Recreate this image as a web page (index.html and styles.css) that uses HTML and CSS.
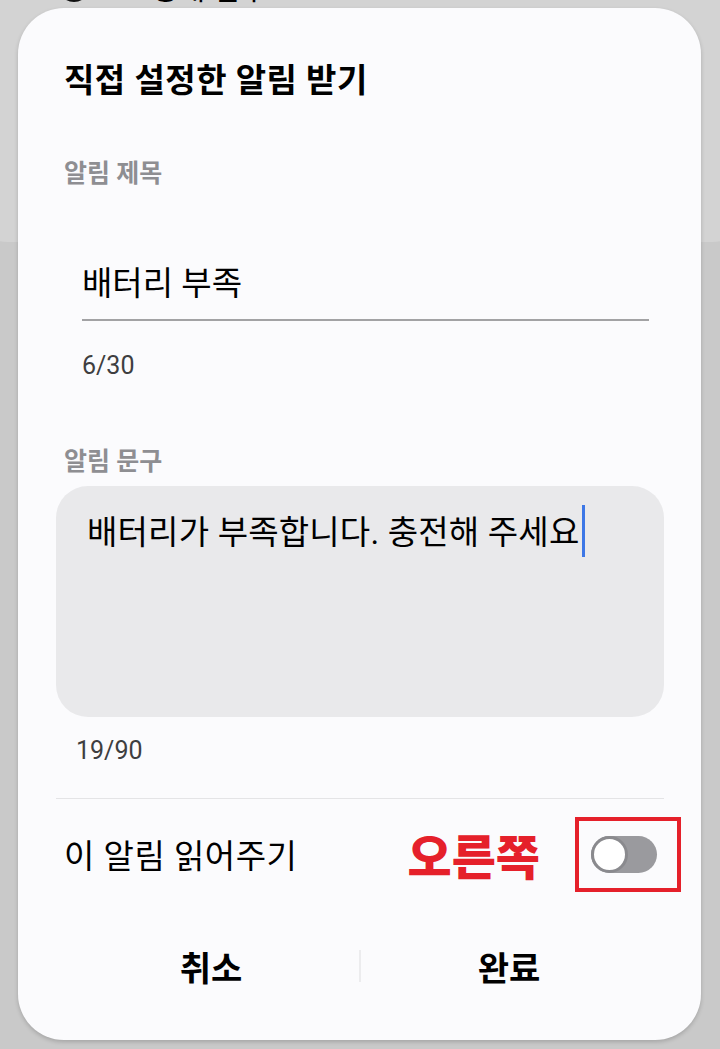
FILE: index.html
```html
<!DOCTYPE html>
<html lang="ko">
<head>
    <meta charset="UTF-8">
    <meta name="viewport" content="width=device-width, initial-scale=1.0">
    <title>직접 설정한 알림 받기</title>
    <link rel="stylesheet" href="styles.css">
</head>
<body>
    <div class="behind">
        <div class="behind-row">
            <span class="behind-icon"></span>
            <span class="behind-text">생애 접수</span>
        </div>
    </div>

    <div class="dialog">
        <h1 class="title">직접 설정한 알림 받기</h1>

        <div class="field-label first">알림 제목</div>
        <div class="title-input">배터리 부족</div>
        <div class="counter title-counter">6/30</div>

        <div class="field-label">알림 문구</div>
        <div class="message-box">
            <span>배터리가 부족합니다. 충전해 주세요</span><span class="cursor"></span>
        </div>
        <div class="counter message-counter">19/90</div>

        <div class="divider"></div>

        <div class="read-row">
            <span class="read-label">이 알림 읽어주기</span>
            <span class="annotation">오른쪽</span>
            <div class="toggle-frame">
                <div class="toggle"><span class="knob"></span></div>
            </div>
        </div>

        <div class="actions">
            <button class="action">취소</button>
            <span class="action-sep"></span>
            <button class="action">완료</button>
        </div>
    </div>
</body>
</html>
```

FILE: styles.css
```css
body {
    margin: 0;
    height: 1049px;
    overflow: hidden;
    position: relative;
    background-color: #c9c9c9;
    font-family: Roboto, "Noto Sans CJK KR", sans-serif;
    color: #000;
}
.behind {
    position: absolute;
    top: -60px;
    left: -40px;
    width: 800px;
    height: 302px;
    border-radius: 48px;
    background-color: #d3d3d3;
}
.behind-row {
    display: flex;
    align-items: center;
    gap: 60px;
    padding: 24px 0 0 98px;
    font-size: 30px;
}
.behind-icon {
    width: 26px;
    height: 26px;
    border: 3px solid #111;
    border-radius: 50%;
}
.dialog {
    position: relative;
    margin: 8px 19px 0 18px;
    height: 1032px;
    border-radius: 46px;
    background-color: #fbfbfd;
    box-shadow: 0 2px 4px rgba(0, 0, 0, 0.18);
    display: flex;
    flex-direction: column;
}
.title {
    margin: 0;
    padding: 50px 0 0 46px;
    font-size: 33px;
    line-height: 46px;
    font-weight: 700;
    letter-spacing: 0.5px;
}
.field-label {
    margin: 0 0 0 46px;
    padding-top: 65px;
    font-size: 25px;
    line-height: 32px;
    font-weight: 700;
    color: #8e8e92;
}
.field-label.first {
    padding-top: 54px;
}
.title-input {
    margin: 73px 52px 0 64px;
    padding-bottom: 14px;
    border-bottom: 2px solid #a2a2a4;
    font-size: 33px;
    line-height: 42px;
}
.counter {
    font-size: 25px;
    line-height: 30px;
    color: #3e3e40;
}
.title-counter {
    margin: 30px 0 0 64px;
}
.message-box {
    margin: 8px 37px 0 38px;
    height: 231px;
    box-sizing: border-box;
    padding: 24px 0 0 31px;
    border-radius: 32px;
    background-color: #e9e9eb;
    font-size: 33px;
    line-height: 46px;
    letter-spacing: 0.2px;
    display: flex;
    align-items: flex-start;
}
.cursor {
    width: 3px;
    height: 52px;
    margin: -5px 0 0 3px;
    background-color: #3d77e6;
}
.message-counter {
    margin: 19px 0 0 58px;
}
.divider {
    margin: 32px 37px 0 38px;
    height: 1px;
    background-color: #e4e4e6;
}
.read-row {
    display: flex;
    align-items: center;
    margin: 17px 20px 0 46px;
    height: 76px;
}
.read-label {
    font-size: 33px;
    letter-spacing: 0.5px;
    flex: 1;
}
.annotation {
    font-family: "Noto Sans CJK KR", sans-serif;
    font-size: 48px;
    font-weight: 900;
    color: #e5202a;
    margin-right: 35px;
}
.toggle-frame {
    width: 106px;
    height: 75px;
    box-sizing: border-box;
    border: 4px solid #e5202a;
    padding-left: 12px;
    display: flex;
    align-items: center;
}
.toggle {
    width: 66px;
    height: 37px;
    border-radius: 19px;
    background-color: #9a9a9e;
    position: relative;
}
.knob {
    position: absolute;
    left: 0;
    top: 0;
    width: 31px;
    height: 31px;
    border: 3px solid #8a8a8e;
    border-radius: 50%;
    background-color: #fff;
}
.actions {
    display: flex;
    align-items: center;
    margin: 49px 44px 0 45px;
    height: 50px;
}
.action {
    flex: 1;
    border: none;
    background: none;
    padding: 0;
    font-family: Roboto, "Noto Sans CJK KR", sans-serif;
    font-size: 34px;
    font-weight: 700;
    color: #000;
}
.action-sep {
    width: 2px;
    height: 32px;
    background-color: #ececee;
}
```
